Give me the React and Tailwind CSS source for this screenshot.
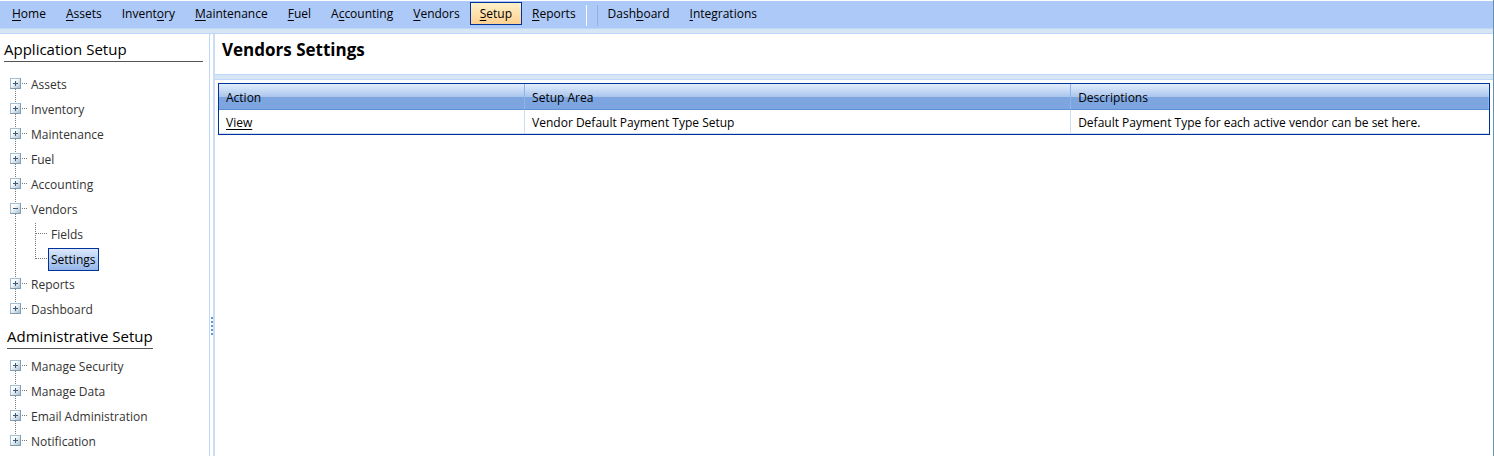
import React, { useState } from "react";

const menuItems = [
  { label: "Home", key: 0 },
  { label: "Assets", key: 0 },
  { label: "Inventory", key: 6 },
  { label: "Maintenance", key: 0 },
  { label: "Fuel", key: 0 },
  { label: "Accounting", key: 1 },
  { label: "Vendors", key: 0 },
  { label: "Setup", key: 0, active: true },
  { label: "Reports", key: 0 },
];

const extraItems = [
  { label: "Dashboard", key: 4 },
  { label: "Integrations", key: 0 },
];

const applicationTree = [
  { label: "Assets" },
  { label: "Inventory" },
  { label: "Maintenance" },
  { label: "Fuel" },
  { label: "Accounting" },
  { label: "Vendors", children: ["Fields", "Settings"] },
  { label: "Reports" },
  { label: "Dashboard" },
];

const adminTree = [
  { label: "Manage Security" },
  { label: "Manage Data" },
  { label: "Email Administration" },
  { label: "Notification" },
];

const MenuItem = ({ label, accessIndex, active }) => (
  <a
    href="#"
    className={`flex h-[23px] items-center border px-[9px] ${
      active
        ? "border-[#003399] bg-linear-to-b from-[#fff2c8] to-[#ffd091]"
        : "border-transparent hover:bg-[#c5daff]"
    }`}
  >
    <span>
      {label.slice(0, accessIndex)}
      <span className="underline underline-offset-2">{label[accessIndex]}</span>
      {label.slice(accessIndex + 1)}
    </span>
  </a>
);

const ToggleIcon = ({ open, first, last }) => (
  <svg width="31" height="25" viewBox="0 0 31 25" shapeRendering="crispEdges">
    <defs>
      <linearGradient id="toggleFill" x1="0" y1="0" x2="1" y2="1">
        <stop offset="0.3" stopColor="#ffffff" />
        <stop offset="1" stopColor="#a3bccf" />
      </linearGradient>
    </defs>
    {!first && (
      <path d="M15.5 0V6" stroke="#777" strokeDasharray="1 1" />
    )}
    {!last && <path d="M15.5 17V25" stroke="#777" strokeDasharray="1 1" />}
    <path d="M22 11.5H27" stroke="#777" strokeDasharray="1 1" />
    <rect x="10.5" y="6.5" width="10" height="10" fill="url(#toggleFill)" stroke="#a5bfd3" />
    <path d="M10 16.5H20.5V6" fill="none" stroke="#7f9db5" />
    <path d="M13 11.5H18" stroke="#3c5a78" />
    {!open && <path d="M15.5 9V14" stroke="#3c5a78" />}
  </svg>
);

const BranchIcon = ({ last, parentLast }) => (
  <svg
    className="shrink-0"
    width="48"
    height="25"
    viewBox="0 0 48 25"
    shapeRendering="crispEdges"
  >
    {!parentLast && (
      <path d="M15.5 1V25" stroke="#777" strokeDasharray="1 1" />
    )}
    <path
      d={last ? "M35.5 1V12" : "M35.5 1V25"}
      stroke="#777"
      strokeDasharray="1 1"
    />
    <path d="M36 11.5H47" stroke="#777" strokeDasharray="1 1" />
  </svg>
);

const TreeNode = ({ node, first, last, selected, onSelect }) => {
  const [open, setOpen] = useState(Boolean(node.children));

  return (
    <li>
      <div className="flex h-[25px] items-center">
        <button
          type="button"
          aria-label={`Toggle ${node.label}`}
          aria-expanded={open}
          onClick={() => setOpen(!open)}
        >
          <ToggleIcon open={open} first={first} last={last} />
        </button>
        <a href="#" className="whitespace-nowrap">
          {node.label}
        </a>
      </div>
      {open && node.children && (
        <ul>
          {node.children.map((child, index) => (
            <li key={child} className="flex h-[25px] items-center">
              <BranchIcon
                last={index === node.children.length - 1}
                parentLast={last}
              />
              <a
                href="#"
                onClick={() => onSelect(child)}
                className={`flex h-[23px] items-center border px-[2px] ${
                  selected === child
                    ? "border-[#003399] bg-linear-to-b from-[#dbe8fb] to-[#95b7ea] text-black"
                    : "border-transparent"
                }`}
              >
                {child}
              </a>
            </li>
          ))}
        </ul>
      )}
    </li>
  );
};

const Tree = ({ nodes, selected, onSelect }) => (
  <ul className="text-[#333]">
    {nodes.map((node, index) => (
      <TreeNode
        key={node.label}
        node={node}
        first={index === 0}
        last={index === nodes.length - 1}
        selected={selected}
        onSelect={onSelect}
      />
    ))}
  </ul>
);

const App = () => {
  const [selected, setSelected] = useState("Settings");

  return (
    <div className="flex min-h-screen flex-col border-r border-[#6694ad] bg-white pt-px font-['Open_Sans','Noto_Sans',sans-serif] text-[12px] leading-4 text-black">
      <nav className="flex h-[27px] items-start bg-[#adc9f7] pt-px pl-[2px]">
        {menuItems.map((item) => (
          <MenuItem
            key={item.label}
            label={item.label}
            accessIndex={item.key}
            active={item.active}
          />
        ))}
        <div className="h-[21px] w-3 self-center border-r border-l border-r-[#8db2e9] border-l-white" />
        {extraItems.map((item) => (
          <MenuItem key={item.label} label={item.label} accessIndex={item.key} />
        ))}
      </nav>
      <div className="h-[6px] border-y border-[#bfd6f8] bg-[#d6e6f5]" />

      <div className="flex flex-1">
        <aside className="w-[210px] shrink-0 border-r border-[#bfd6f8]">
          <h2 className="mt-1 mr-[6px] ml-1 border-b border-[#555] pb-px text-[15px] leading-[22px]">
            Application Setup
          </h2>
          <div className="pt-[10px]">
            <Tree
              nodes={applicationTree}
              selected={selected}
              onSelect={setSelected}
            />
          </div>
          <h2 className="mt-[3px] ml-[7px] w-fit border-b border-[#555] pb-px text-[15px] leading-[22px]">
            Administrative Setup
          </h2>
          <div className="pt-[5px]">
            <Tree nodes={adminTree} selected={selected} onSelect={setSelected} />
          </div>
        </aside>

        <div className="w-[5px] shrink-0 border-r-2 border-[#cadefa] pt-[283px]">
          <svg width="3" height="20" viewBox="0 0 3 20" shapeRendering="crispEdges">
            <path d="M2 0V20" stroke="#6593cf" strokeWidth="2" strokeDasharray="2 2" />
          </svg>
        </div>

        <main className="min-w-0 flex-1">
          <h1 className="px-[7px] pt-1 pb-3 text-[17px] leading-6 font-bold">
            Vendors Settings
          </h1>
          <div className="h-[6px] border-y border-[#bfd6f8] bg-[#d6e6f5]" />
          <div className="px-[3px] pt-[3px]">
            <table className="w-full table-fixed border-separate border-spacing-0 border border-[#003399] text-left">
              <colgroup>
                <col className="w-[24.1%]" />
                <col className="w-[43%]" />
                <col />
              </colgroup>
              <thead>
                <tr className="h-[26px] bg-[linear-gradient(#e3effe,#a9c4ec_50%,#7da5e0_50%,#7da5e0)]">
                  <th className="border-r border-b border-r-[#8fb3e8] border-b-[#5d8fd3] px-[7px] pt-0.5 font-normal">
                    Action
                  </th>
                  <th className="border-r border-b border-r-[#8fb3e8] border-b-[#5d8fd3] px-[7px] pt-0.5 font-normal">
                    Setup Area
                  </th>
                  <th className="border-b border-[#5d8fd3] px-[7px] pt-0.5 font-normal">
                    Descriptions
                  </th>
                </tr>
              </thead>
              <tbody>
                <tr className="h-6">
                  <td className="border-r border-b border-[#d0dcf0] px-[7px] pt-0.5">
                    <a href="#" className="underline underline-offset-2">
                      View
                    </a>
                  </td>
                  <td className="border-r border-b border-[#d0dcf0] px-[7px] pt-0.5">
                    Vendor Default Payment Type Setup
                  </td>
                  <td className="border-b border-[#d0dcf0] px-[7px] pt-0.5">
                    Default Payment Type for each active vendor can be set here.
                  </td>
                </tr>
              </tbody>
            </table>
          </div>
        </main>
      </div>
    </div>
  );
};

export default App;
